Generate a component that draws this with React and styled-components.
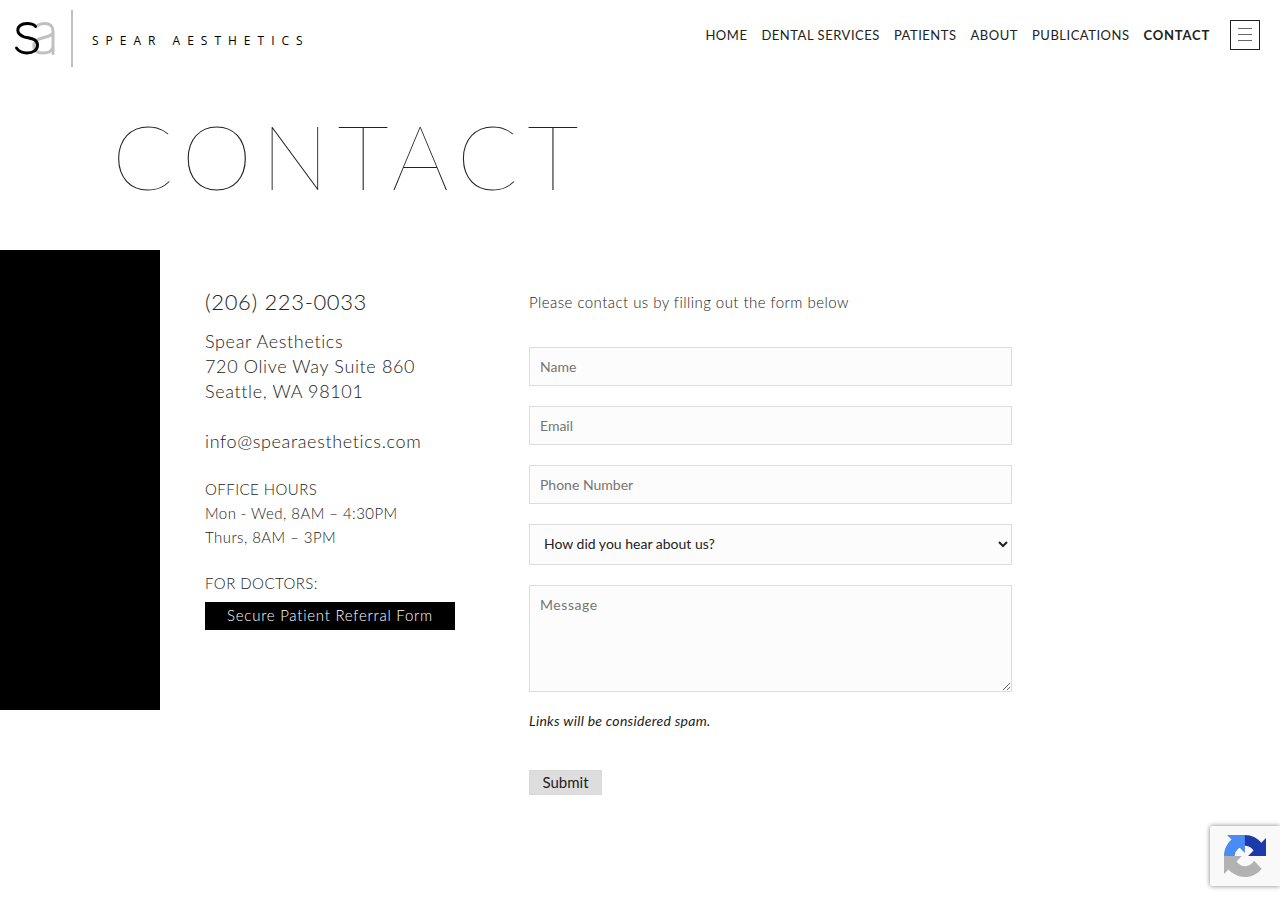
import React, { useState } from 'react'
import styled, { createGlobalStyle } from 'styled-components'

const links = ['Home', 'Dental Services', 'Patients', 'About', 'Publications', 'Contact']

const App = () => {

    const [source, setSource] = useState('')

    return (
        <>
            <GlobalStyle />
            <Header>
                <Logo href="#home">
                    <Monogram />
                    <Divider />
                    <Wordmark>SPEAR AESTHETICS</Wordmark>
                </Logo>
                <Nav>
                    {links.map((link) => (
                        <NavLink key={link} href={`#${link}`} $active={link === 'Contact'}>{link}</NavLink>
                    ))}
                </Nav>
                <MenuButton type="button" aria-label="Menu">
                    <span />
                    <span />
                    <span />
                </MenuButton>
            </Header>
            <Title>Contact</Title>
            <Content>
                <BlackPanel />
                <Columns>
                    <Details>
                        <Phone href="tel:2062230033">(206) 223-0033</Phone>
                        <Address>
                            Spear Aesthetics<br />
                            720 Olive Way Suite 860<br />
                            Seattle, WA 98101<br />
                            <br />
                            <a href="mailto:info@spearaesthetics.com">info@spearaesthetics.com</a>
                        </Address>
                        <Hours>
                            OFFICE HOURS<br />
                            Mon - Wed, 8AM – 4:30PM<br />
                            Thurs, 8AM – 3PM
                        </Hours>
                        <Doctors>FOR DOCTORS:</Doctors>
                        <ReferralLink href="#referral">Secure Patient Referral Form</ReferralLink>
                    </Details>
                    <Form onSubmit={(e) => e.preventDefault()}>
                        <Intro>Please contact us by filling out the form below</Intro>
                        <Input type="text" aria-label="Name" placeholder="Name" />
                        <Input type="email" aria-label="Email" placeholder="Email" />
                        <Input type="tel" aria-label="Phone Number" placeholder="Phone Number" />
                        <Select
                            aria-label="How did you hear about us?"
                            value={source}
                            onChange={(e) => setSource(e.target.value)}
                        >
                            <option value="">How did you hear about us?</option>
                            <option value="search">Search</option>
                            <option value="friend">Friend</option>
                        </Select>
                        <Message aria-label="Message" placeholder="Message" />
                        <Note>Links will be considered spam.</Note>
                        <Submit type="submit">Submit</Submit>
                    </Form>
                </Columns>
            </Content>
            <Badge>
                <RecaptchaIcon />
            </Badge>
        </>
    )
}

const Monogram = () => (
    <svg width="42" height="37" viewBox="0 0 42 37" fill="none" strokeWidth="3" strokeLinecap="round">
        <path stroke="#c0c0c0" d="M23 6C25 4 28 3.500 31 3.500C36 3.500 39 6.500 39 11V33.500M39 13C38 15 34 16.500 30 17.500C25 18.700 19.800 20 19.800 26C19.800 31 24 33 29 33C34 33 38 31 39 27" />
        <path stroke="#000" d="M21.500 6.500C20 4.300 17 3.500 13 3.500C7 3.500 3.800 6.500 3.800 10C3.800 14 6.500 15.500 10 16.800C15 18.500 23.500 18 23.500 25C23.500 30 19 33 13 33C8 33 4.500 31 2.500 28" />
    </svg>
)

const RecaptchaIcon = () => (
    <svg width="42" height="42" viewBox="0 0 64 64">
        <path fill="#1c3aa9" d="M64 31.955l-.033-1.370V4.687l-7.160 7.160C50.948 4.674 42.033.093 32.050.093c-10.400 0-19.622 4.960-25.458 12.640l11.736 11.860a15.550 15.550 0 0 1 4.754-5.334c2.050-1.600 4.952-2.906 8.968-2.906.485 0 .860.057 1.135.163 4.976.393 9.288 3.140 11.828 7.124l-8.307 8.307L64 31.953" />
        <path fill="#4a8cf6" d="M31.862.094l-1.370.033H4.594l7.160 7.160C4.580 13.147 0 22.060 0 32.046c0 10.400 4.960 19.622 12.640 25.458L24.500 45.768a15.550 15.550 0 0 1-5.334-4.754c-1.600-2.050-2.906-4.952-2.906-8.968 0-.485.057-.860.163-1.135.393-4.976 3.140-9.288 7.124-11.828l8.307 8.307L31.860.095" />
        <path fill="#b2b2b2" d="M.001 32.045l.033 1.370v25.898l7.160-7.160c5.860 7.173 14.774 11.754 24.760 11.754 10.400 0 19.622-4.960 25.458-12.640l-11.736-11.860a15.550 15.550 0 0 1-4.754 5.334c-2.050 1.600-4.952 2.906-8.968 2.906-.485 0-.860-.057-1.135-.163-4.976-.393-9.288-3.140-11.828-7.124l8.307-8.307c-10.522.040-22.400.066-27.295-.005" />
    </svg>
)

export default App

const GlobalStyle = createGlobalStyle`
*{
    box-sizing: border-box;
}
body{
    margin: 0;
    background: #fff;
    color: #222;
    font-family: Lato, sans-serif;
}
a{
    color: inherit;
    text-decoration: none;
}
`

const Header = styled.header`
display: flex;
align-items: flex-start;
padding: 10px 20px 0 14px;
`

const Logo = styled.a`
display: flex;
align-items: center;
margin-right: auto;
`

const Divider = styled.span`
width: 2px;
height: 57px;
margin: 0 19px 0 15px;
background: #c0c0c0;
`

const Wordmark = styled.span`
font: 12px/16px "Open Sans", sans-serif;
letter-spacing: 7px;
color: #000;
padding-top: 4px;
`

const Nav = styled.nav`
display: flex;
gap: 14px;
padding-top: 15px;
`

const NavLink = styled.a`
font-size: 13px;
line-height: 20px;
letter-spacing: ${(props) => (props.$active ? '0.06em' : '0.04em')};
text-transform: uppercase;
font-weight: ${(props) => (props.$active ? 700 : 400)};
`

const MenuButton = styled.button`
display: flex;
flex-direction: column;
align-items: center;
justify-content: center;
gap: 5px;
width: 30px;
height: 30px;
margin: 10px 0 0 20px;
padding: 0 0 1px;
border: 1px solid #222;
background: #fff;
cursor: pointer;
span{
    width: 14px;
    height: 1px;
    background: #666;
}
`

const Title = styled.h1`
margin: 36px 0 42px 112px;
font-size: 90px;
line-height: 105px;
font-weight: 100;
letter-spacing: 0.1em;
text-transform: uppercase;
`

const Content = styled.main`
display: grid;
grid-template-columns: 12.5% 1fr;
align-items: start;
`

const BlackPanel = styled.div`
height: 460px;
background: #000;
`

const Columns = styled.div`
display: grid;
grid-template-columns: 324px 1fr;
padding: 40px 268px 60px 45px;
`

const Details = styled.section`
display: flex;
flex-direction: column;
align-items: flex-start;
font-weight: 300;
letter-spacing: 0.04em;
`

const Phone = styled.a`
font-size: 22px;
line-height: 24px;
margin-bottom: 15px;
`

const Address = styled.address`
font-size: 18px;
line-height: 25px;
font-style: normal;
margin-bottom: 23px;
`

const Hours = styled.p`
margin: 0 0 22px;
font-size: 15px;
line-height: 24px;
letter-spacing: 0.03em;
`

const Doctors = styled(Hours)`
margin-bottom: 7px;
`

const ReferralLink = styled.a`
width: 250px;
padding-bottom: 2px;
background: #000;
color: #fff;
font-size: 15px;
line-height: 26px;
letter-spacing: 0.05em;
text-align: center;
`

const Form = styled.form`
display: flex;
flex-direction: column;
gap: 20px;
`

const Intro = styled.p`
margin: 0 0 13px;
font-size: 15px;
line-height: 24px;
font-weight: 300;
letter-spacing: 0.03em;
`

const Input = styled.input`
width: 100%;
height: 39px;
padding: 0 10px;
border: 1px solid #ddd;
border-radius: 0;
background: #fcfcfc;
color: #222;
font: 14px/18px Lato, sans-serif;
&::placeholder{
    color: #757575;
}
`

const Select = styled(Input).attrs({ as: 'select' })`
height: 41px;
padding-bottom: 2px;
`

const Message = styled(Input).attrs({ as: 'textarea' })`
display: block;
height: 107px;
padding: 10px;
letter-spacing: 0.04em;
resize: vertical;
`

const Note = styled.p`
margin: 0 0 20px;
font-size: 14px;
line-height: 18px;
font-style: italic;
letter-spacing: 0.02em;
`

const Submit = styled.button`
align-self: flex-start;
width: 73px;
height: 25px;
padding: 0 0 2px;
border: 1px solid #d8d8d8;
background: #ddd;
color: #222;
font: 15px/20px Lato, sans-serif;
cursor: pointer;
`

const Badge = styled.div`
position: fixed;
right: 0;
bottom: 14px;
display: flex;
align-items: center;
width: 70px;
height: 60px;
padding-left: 14px;
border-radius: 2px 0 0 2px;
background: #f9f9f9;
box-shadow: 0 0 5px gray;
`
